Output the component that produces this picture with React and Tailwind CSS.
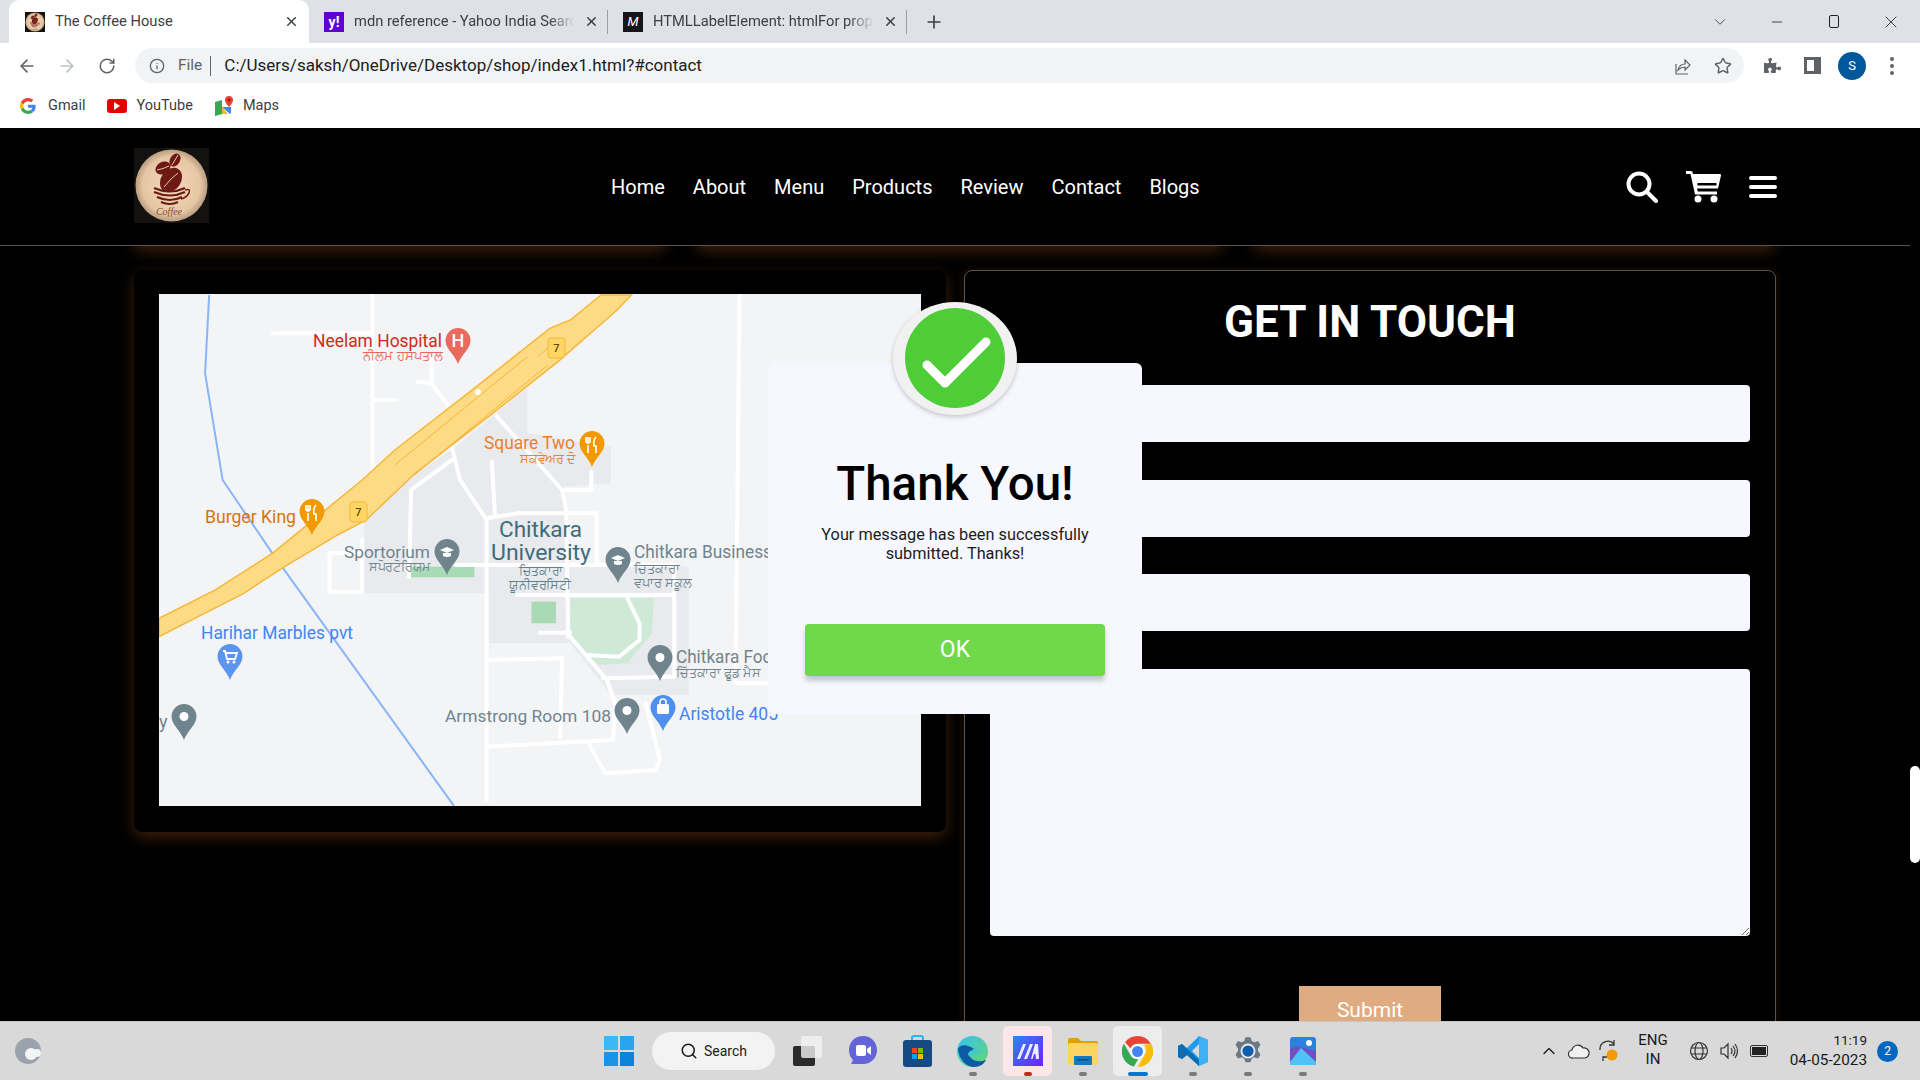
import React from 'react';
import { ArrowLeft, ArrowRight, RotateCw, Info, Star, ChevronDown, ChevronUp, Minus, X, Plus, Search } from 'lucide-react';
import { FaPuzzlePiece } from 'react-icons/fa';

const NAV_LINKS = ['Home', 'About', 'Menu', 'Products', 'Review', 'Contact', 'Blogs'];

function CoffeeLogo({ size }) {
  return (
    <svg width={size} height={size} viewBox="0 0 75 75" className="shrink-0">
      <defs>
        <radialGradient id={`cup${size}`} cx="50%" cy="50%" r="50%">
          <stop offset="0%" stopColor="#f4d9bb" />
          <stop offset="80%" stopColor="#e6c6a4" />
          <stop offset="100%" stopColor="#b99c80" />
        </radialGradient>
      </defs>
      <rect width="75" height="75" fill="#141210" />
      <circle cx="37.5" cy="37.5" r="36" fill={`url(#cup${size})`} />
      <g fill="#6d1a14">
        <ellipse cx="37" cy="32" rx="10" ry="13" transform="rotate(35 37 32)" />
        <ellipse cx="29" cy="20" rx="6" ry="8" transform="rotate(60 29 20)" />
        <ellipse cx="41" cy="12" rx="5" ry="7" transform="rotate(30 41 12)" />
      </g>
      <g fill="none" stroke="#e6c6a4" strokeWidth="1">
        <path d="M30 39 Q37 30 44 25" />
        <path d="M23 22 Q29 21 35 18" />
        <path d="M38 17 Q41 12 44 7" />
      </g>
      <g fill="none" stroke="#6d1a14" strokeWidth="2.2">
        <path d="M20 40 Q36 47 51 40" />
        <path d="M20 44 Q36 51 51 44" />
        <path d="M23 49 Q36 55 48 49" />
        <path d="M27 54 Q36 58 44 54" />
        <path d="M51 42 Q57 40 55 45 Q52 50 47 51" strokeWidth="1.5" />
      </g>
      <text x="35" y="67" textAnchor="middle" fontFamily="'Liberation Serif', serif" fontStyle="italic" fontSize="10" fill="#7d4a38">Coffee</text>
    </svg>
  );
}

function Tab({ icon, title, active, divider }) {
  return (
    <div className={active
      ? 'ml-[9px] w-[300px] h-full bg-white rounded-t-[10px] flex items-center pl-[16px] pr-[12px]'
      : 'w-[299px] h-full flex items-center pl-[15px] pr-[12px]'}>
      {icon}
      <span className={active
        ? 'ml-[10px] w-[215px] text-[14.7px] text-[#3c4043] whitespace-nowrap overflow-hidden'
        : 'ml-[10px] w-[221px] text-[14.7px] text-[#3c4043] whitespace-nowrap overflow-hidden [mask-image:linear-gradient(to_right,black_88%,transparent)]'}>{title}</span>
      <X size={15} strokeWidth={2.4} className={active ? 'ml-auto -mr-[2px] text-[#3c4043]' : 'ml-auto mr-[3px] text-[#3c4043]'} />
      {divider && <div className="w-px h-[24px] bg-[#9aa0a6] ml-[5px] -mr-[12px]" />}
    </div>
  );
}

function TabStrip() {
  return (
    <div className="h-[43px] bg-[#dee1e6] flex items-end">
      <Tab active title="The Coffee House" icon={<CoffeeLogo size={20} />} />
      <Tab divider title="mdn reference - Yahoo India Search" icon={
        <div className="w-[20px] h-[20px] bg-[#6001d2] text-white text-[14px] font-bold leading-[20px] text-center shrink-0">y!</div>
      } />
      <Tab divider title="HTMLLabelElement: htmlFor property" icon={
        <div className="w-[20px] h-[20px] bg-[#15141a] text-white text-[13px] italic leading-[20px] text-center shrink-0">M</div>
      } />
      <div className="w-[40px] h-full flex items-center justify-center ml-[7px]">
        <Plus size={20} strokeWidth={2} className="text-[#3c4043]" />
      </div>
      <div className="ml-auto flex h-full items-center pr-px text-[#202124]">
        <div className="w-[57px] flex justify-center"><ChevronDown size={18} strokeWidth={1} /></div>
        <div className="w-[57px] flex justify-center"><Minus size={16} strokeWidth={1.2} /></div>
        <div className="w-[57px] flex justify-center">
          <div className="w-[10px] h-[13px] border border-[#202124] rounded-[2px]" />
        </div>
        <div className="w-[57px] flex justify-center"><X size={20} strokeWidth={1} /></div>
      </div>
    </div>
  );
}

function Toolbar() {
  return (
    <div className="h-[43px] pt-[2px] bg-white flex items-center pl-[7px]">
      <div className="w-[40px] flex justify-center"><ArrowLeft size={20} className="text-[#5f6368]" /></div>
      <div className="w-[40px] flex justify-center"><ArrowRight size={20} className="text-[#bdc1c6]" /></div>
      <div className="w-[40px] flex justify-center"><RotateCw size={18} className="text-[#5f6368]" /></div>
      <div className="ml-[8px] w-[1609px] h-[35px] rounded-full bg-[#f1f3f4] flex items-center pl-[14px]">
        <Info size={16} className="text-[#5f6368]" />
        <span className="ml-[13px] text-[15.5px] text-[#5f6368]">File</span>
        <div className="ml-[8px] w-px h-[20px] bg-[#5f6368]" />
        <span className="ml-[13px] text-[17px] text-[#202124]">C:/Users/saksh/OneDrive/Desktop/shop/index1.html?#contact</span>
        <svg width="18" height="20" viewBox="0 0 18 20" fill="none" stroke="#5f6368" strokeWidth="1.2" className="ml-auto">
          <path d="M3 8v10h12" />
          <path d="M5 14c1-4 4-6 7-6V4l5 5-5 5v-3c-3 0-5 1-7 3z" />
        </svg>
        <Star size={18} strokeWidth={2} className="ml-[23px] mr-[12px] text-[#5f6368]" />
      </div>
      <div className="ml-[8px] w-[40px] flex justify-center"><FaPuzzlePiece size={17} className="text-[#5f6368]" /></div>
      <div className="w-[40px] flex justify-center">
        <div className="w-[17px] h-[17px] border-[3px] border-r-[7px] border-[#5f6368]" />
      </div>
      <div className="w-[40px] flex justify-center">
        <div className="w-[28px] h-[28px] rounded-full bg-[#01579b] text-white text-[13px] leading-[28px] text-center">S</div>
      </div>
      <div className="w-[40px] flex flex-col items-center gap-[3px]">
        <div className="w-[4px] h-[4px] rounded-full bg-[#5f6368]" />
        <div className="w-[4px] h-[4px] rounded-full bg-[#5f6368]" />
        <div className="w-[4px] h-[4px] rounded-full bg-[#5f6368]" />
      </div>
    </div>
  );
}

function Bookmarks() {
  return (
    <div className="h-[42px] pb-[3px] bg-white flex items-center text-[14.5px] text-[#3c4043]">
      <svg width="16" height="16" viewBox="0 0 48 48" className="ml-[20px]">
        <path fill="#ea4335" d="M24 9.5c3.5 0 6.700 1.200 9.200 3.600l6.900-6.900C35.900 2.400 30.500 0 24 0 14.600 0 6.500 5.400 2.600 13.200l8 6.200C12.500 13.600 17.800 9.500 24 9.500z" />
        <path fill="#4285f4" d="M47 24.500c0-1.600-.2-3.100-.4-4.500H24v9h12.900c-.6 3-2.200 5.500-4.700 7.200l7.700 6C44.400 38.600 47 32.100 47 24.500z" />
        <path fill="#fbbc05" d="M10.500 28.600c-.5-1.400-.8-3-.8-4.600s.3-3.200.8-4.600l-8-6.200C.9 16.500 0 20.100 0 24s.9 7.500 2.600 10.800z" />
        <path fill="#34a853" d="M24 48c6.500 0 11.900-2.100 15.900-5.800l-7.700-6c-2.200 1.500-4.900 2.300-8.200 2.300-6.200 0-11.500-4.100-13.400-9.900l-8 6.200C6.500 42.600 14.600 48 24 48z" />
      </svg>
      <span className="ml-[12px]">Gmail</span>
      <div className="ml-[21px] w-[20px] h-[14px] rounded-[3px] bg-[#e60000] flex items-center justify-center">
        <div className="w-0 h-0 border-y-[4px] border-y-transparent border-l-[6px] border-l-white" />
      </div>
      <span className="ml-[10px]">YouTube</span>
      <svg width="20" height="20" viewBox="0 0 20 20" className="ml-[21px]">
        <path fill="#34a853" d="M1 6l7-2v14l-7 2z" />
        <path fill="#fbbc05" d="M8 11l6 7H8z" />
        <path fill="#4285f4" d="M8 11l8 7 1-1V11z" />
        <path fill="#ea4335" d="M15 0a4 4 0 0 0-4 4c0 3 4 7 4 7s4-4 4-7a4 4 0 0 0-4-4z" />
        <circle cx="15" cy="4" r="1.500" fill="#a50e0e" />
      </svg>
      <span className="ml-[9px]">Maps</span>
    </div>
  );
}

function Pin({ x, y, color, children }) {
  return (
    <g transform={`translate(${x} ${y})`}>
      <path d="M0 36 C-3 27 -12.500 21 -12.500 12.500 A12.500 12.500 0 0 1 12.500 12.500 C12.500 21 3 27 0 36z" fill={color} />
      {children}
    </g>
  );
}

const Dot = () => <circle cx="0" cy="12.500" r="4.500" fill="#fff" />;
const Fork = () => <path d="M-4 6v6M-6 6v4q0 2 2 2t2-2V6M-4 14v8M4 6q-3 3-2 9h2v7" stroke="#fff" strokeWidth="1.600" fill="none" />;
const Cap = () => <path d="M-7 11l7-3 7 3-7 3zM-4 14v3q4 2 8 0v-3" fill="#fff" />;

function MapLabel({ x, y, w, size = 18, weight = 400, color, children }) {
  return (
    <text x={x} y={y} textLength={w} lengthAdjust="spacingAndGlyphs" fontSize={size} fontWeight={weight} fill={color}
      fontFamily="Roboto, 'Noto Sans', sans-serif">{children}</text>
  );
}

function CampusMap() {
  const roads = [
    'M545 15V575', 'M300 130H545', 'M550 330H600', 'M1445 15L1435 1180H1510',
    'M690 210V280L745 370M690 280L655 275', 'M840 365L1010 600L1020 660L1025 1040',
    'M740 470L760 570L825 690V1530', 'M740 510L640 600L635 860', 'M838 515L845 670',
    'M1082 545V600H1015', 'M825 685L900 670H1095V820', 'M520 750V905H440V790H520',
    'M750 825H1280', 'M900 915H1285M1285 825V1160', 'M1170 925L1200 1000V1050L1150 1100L1070 1095',
    'M955 1028H1030', 'M1030 1040L1120 1170L1140 1240L1135 1350L830 1370',
    'M830 1110L1010 1105L1005 1340', 'M1110 1165L1280 1160', 'M1075 1360L1115 1450L1240 1440L1250 1410L1215 1240',
  ];
  const vb = 'translate(150 290) scale(0.408 0.3333)';
  return (
    <svg width="762" height="512" viewBox="159 294 762 512" className="block">
      <defs><clipPath id="mapText"><rect x="159" y="294" width="619" height="512" /></clipPath></defs>
      <rect x="159" y="294" width="762" height="512" fill="#f3f4f6" />
      <g transform={vb}>
        <path d="M750 470L925 290V430L1130 470V580L1015 590L1020 820L1320 830V1215H1130L1030 1060H830V910H525V690L640 560z" fill="#e8eaed" />
        <path d="M1030 925H1235L1230 1030L1170 1120L1100 1125L1030 1050z" fill="#ceead6" />
        <rect x="935" y="935" width="60" height="65" fill="#a8dab5" />
        <rect x="640" y="830" width="155" height="32" fill="#a8dab5" />
        <path d="M145 15L135 250L178 570L300 790L745 1548" fill="none" stroke="#8ab4f8" strokeWidth="2" vectorEffect="non-scaling-stroke" />
        {roads.map((d) => (
          <path key={d} d={d} fill="none" stroke="#fff" strokeWidth="4" strokeLinecap="round" strokeLinejoin="round" vectorEffect="non-scaling-stroke" />
        ))}
        <path d="M1105 15L1030 90L980 115L800 290L600 480L520 570L440 650L300 790L160 900L22 985V1040L230 910L330 830L460 735L530 690L650 550L840 370L1000 215L1145 60L1180 15z"
          fill="#fddb85" stroke="#f6b73c" strokeWidth="1.500" vectorEffect="non-scaling-stroke" />
        <path d="M600 525L925 200M648 555L975 225M950 200L985 165" fill="none" stroke="#f6b73c" strokeWidth="1" vectorEffect="non-scaling-stroke" />
      </g>
      <g fontFamily="Roboto, sans-serif" fontSize="11" fontWeight="500" fill="#5f4b00" textAnchor="middle">
        <rect x="548" y="338" width="17" height="20" rx="3" fill="#fdd663" stroke="#f6b73c" />
        <text x="556.500" y="352">7</text>
        <rect x="350" y="502" width="17" height="20" rx="3" fill="#fdd663" stroke="#f6b73c" />
        <text x="358.500" y="516">7</text>
      </g>
      <circle cx="478" cy="392" r="3" fill="#fff" />

      <Pin x={458} y={328} color="#ea6a5e">
        <text x="0" y="19" textAnchor="middle" fontSize="18" fontWeight="500" fill="#fff" fontFamily="Roboto, sans-serif">H</text>
      </Pin>
      <Pin x={592} y={431} color="#f29900"><Fork /></Pin>
      <Pin x={312} y={499} color="#f29900"><Fork /></Pin>
      <Pin x={447} y={539} color="#70848e"><Cap /></Pin>
      <Pin x={618} y={547} color="#70848e"><Cap /></Pin>
      <Pin x={660} y={645} color="#70848e"><Dot /></Pin>
      <Pin x={627} y={698} color="#70848e"><Dot /></Pin>
      <Pin x={184} y={704} color="#70848e"><Dot /></Pin>
      <Pin x={230} y={644} color="#5b95f0">
        <path d="M-7 7h2l2 8h8l2-6H-4" stroke="#fff" strokeWidth="1.800" fill="none" />
        <circle cx="-2" cy="18" r="1.500" fill="#fff" /><circle cx="4" cy="18" r="1.500" fill="#fff" />
      </Pin>
      <Pin x={663} y={695} color="#4f8ff0">
        <rect x="-6" y="9" width="12" height="10" rx="1.500" fill="#fff" />
        <path d="M-3 9V7a3 3 0 0 1 6 0v2" stroke="#fff" strokeWidth="1.500" fill="none" />
      </Pin>

      <MapLabel x={313} y={347} w={129} color="#d5281c">Neelam Hospital</MapLabel>
      <MapLabel x={363} y={360} w={80} size={13} color="#e8695c">ਨੀਲਮ ਹਸਪਤਾਲ</MapLabel>
      <MapLabel x={484} y={449} w={91} color="#e8812b">Square Two</MapLabel>
      <MapLabel x={520} y={463} w={56} size={13} color="#e8812b">ਸਕਵੇਅਰ ਦੋ</MapLabel>
      <MapLabel x={205} y={523} w={91} color="#d9730f">Burger King</MapLabel>
      <MapLabel x={344} y={558} w={86} size={17} color="#70848e">Sportorium</MapLabel>
      <MapLabel x={369} y={571} w={62} size={13} color="#70848e">ਸਪੋਰਟੋਰਿਯਮ</MapLabel>
      <MapLabel x={499} y={537} w={83} size={22} color="#3f6c7a">Chitkara</MapLabel>
      <MapLabel x={491} y={560} w={100} size={22} color="#3f6c7a">University</MapLabel>
      <MapLabel x={519} y={575} w={44} size={13} color="#5f7f8a">ਚਿਤਕਾਰਾ</MapLabel>
      <MapLabel x={509} y={589} w={62} size={13} color="#5f7f8a">ਯੂਨੀਵਰਸਿਟੀ</MapLabel>
      <g clipPath="url(#mapText)">
        <MapLabel x={634} y={558} w={138} size={18} color="#70848e">Chitkara Business</MapLabel>
        <MapLabel x={676} y={663} w={106} size={18} color="#70848e">Chitkara Food</MapLabel>
        <MapLabel x={679} y={720} w={99} size={18} color="#4285f4">Aristotle 405</MapLabel>
      </g>
      <MapLabel x={634} y={573} w={46} size={13} color="#70848e">ਚਿਤਕਾਰਾ</MapLabel>
      <MapLabel x={634} y={587} w={58} size={13} color="#70848e">ਵਪਾਰ ਸਕੂਲ</MapLabel>
      <MapLabel x={676} y={677} w={85} size={13} color="#70848e">ਚਿੱਤਕਾਰਾ ਫੂਡ ਮੈਸ</MapLabel>
      <MapLabel x={201} y={639} w={152} color="#4285f4">Harihar Marbles pvt</MapLabel>
      <MapLabel x={445} y={722} w={166} size={17} color="#70848e">Armstrong Room 108</MapLabel>
      <text x="159" y="728" fontSize="18" fill="#70848e" fontFamily="Roboto, sans-serif">y</text>
    </svg>
  );
}

function ContactForm() {
  return (
    <div className="w-[812px] h-[900px] shrink-0 border border-[#555] rounded-[8px] px-[25px] shadow-[0_0_10px_rgba(190,100,30,0.18)]">
      <h3 className="text-center text-white text-[44px] font-bold leading-[52px] pt-[25px]">GET IN TOUCH</h3>
      <input className="block mt-[37px] w-full h-[57px] rounded-[4px] bg-[#f6f7ff]" />
      <input className="block mt-[38px] w-full h-[57px] rounded-[4px] bg-[#f6f7ff]" />
      <input className="block mt-[37px] w-full h-[57px] rounded-[4px] bg-[#f6f7ff]" />
      <textarea className="block mt-[38px] w-full h-[267px] rounded-[4px] bg-[#f6f7ff]" />
      <button className="block mx-auto mt-[50px] w-[142px] h-[50px] bg-[#deac80] text-white text-[21px]">Submit</button>
    </div>
  );
}

function ThankYouModal() {
  return (
    <div className="absolute left-[768px] top-[235px] w-[374px] h-[351px] bg-[#f6f7ff] rounded-[6px] flex flex-col items-center">
      <div className="absolute left-[125px] -top-[61px] w-[124px] h-[113px] rounded-[50%] bg-[#f1f1f1] shadow-[0_2px_5px_rgba(0,0,0,0.2)] flex items-center justify-center">
        <div className="-mt-[2px] w-[100px] h-[100px] rounded-full bg-[#4ecd39]">
          <svg width="100" height="100" viewBox="0 0 100 100">
            <path d="M22 57L40 75L81 34" fill="none" stroke="#fff" strokeWidth="9" strokeLinecap="round" strokeLinejoin="round" />
          </svg>
        </div>
      </div>
      <h2 className="mt-[93px] text-[47.5px] leading-[56px] font-medium text-black">Thank You!</h2>
      <p className="mt-[13px] w-[300px] text-center text-[16.3px] leading-[19px] text-[#1c1c1c]">Your message has been successfully submitted. Thanks!</p>
      <button className="mt-[61px] w-[300px] h-[52px] rounded-[4px] bg-[#6fd84b] text-white text-[23px] shadow-[0_5px_5px_rgba(0,0,0,0.2)]">OK</button>
    </div>
  );
}

function Header() {
  return (
    <header className="relative z-10 h-[118px] bg-black border-b border-[#555] flex items-center pl-[134px] pr-[133px]">
      <div className="-mt-[3px]"><CoffeeLogo size={75} /></div>
      <nav className="ml-[402px] flex gap-[28px] text-white text-[20px]">
        {NAV_LINKS.map((link) => <a key={link}>{link}</a>)}
      </nav>
      <div className="ml-auto flex items-center gap-[28px] text-white">
        <svg width="32" height="32" viewBox="0 0 32 32" fill="none" stroke="#fff" strokeWidth="4" strokeLinecap="round">
          <circle cx="13" cy="13" r="10.500" />
          <path d="M21 21l9 9" />
        </svg>
        <svg width="35" height="32" viewBox="0 0 35 32" fill="#fff">
          <path d="M0 0h5q1 0 1.500 1L7 3h27q1.500 0 1 1.500l-3 13H11l.8 3H31v3H9L4.500 3H0z" />
          <rect x="11.500" y="12" width="19" height="2.500" fill="#000" />
          <circle cx="12" cy="28" r="3.500" /><circle cx="28" cy="28" r="3.500" />
        </svg>
        <svg width="28" height="24" viewBox="0 0 28 24" stroke="#fff" strokeWidth="4" strokeLinecap="round">
          <path d="M2 3h24M2 12h24M2 21h24" />
        </svg>
      </div>
    </header>
  );
}

function RunDot({ color = 'bg-[#7a7a7a]', wide }) {
  return <div className={`absolute bottom-[5px] left-1/2 -translate-x-1/2 h-[4px] rounded-full ${wide ? 'w-[20px]' : 'w-[8px]'} ${color}`} />;
}

function TaskSlot({ children, dot, highlight }) {
  return (
    <div className="relative w-[55px] h-[59px] flex items-center justify-center">
      {highlight && <div className={`absolute left-[3px] top-[4px] w-[49px] h-[50px] rounded-[5px] ${highlight}`} />}
      <div className="relative">{children}</div>
      {dot}
    </div>
  );
}

function Taskbar() {
  return (
    <div className="h-[59px] bg-[#d9d9d9] border-t border-[#c6c6c6] flex items-center text-[#1a1a1a]">
      <svg width="28" height="28" viewBox="0 0 28 28" className="ml-[14px]">
        <circle cx="14" cy="14" r="13" fill="#9aa3ab" />
        <circle cx="17" cy="17" r="6" fill="#f2f4f6" />
        <circle cx="23" cy="16" r="4" fill="#f2f4f6" />
      </svg>
      <svg width="30" height="30" viewBox="0 0 30 30" className="ml-[562px]">
        <rect x="0" y="0" width="14" height="14" fill="#3cb8f6" />
        <rect x="16" y="0" width="14" height="14" fill="#27a5ef" />
        <rect x="0" y="16" width="14" height="14" fill="#1895e6" />
        <rect x="16" y="16" width="14" height="14" fill="#0c83d8" />
      </svg>
      <div className="ml-[18px] w-[123px] h-[38px] rounded-full bg-[#f3f3f3] flex items-center pl-[28px] text-[14px]">
        <Search size={18} strokeWidth={2} />
        <span className="ml-[6px]">Search</span>
      </div>
      <div className="ml-[5px] flex">
        <TaskSlot>
          <svg width="29" height="30" viewBox="0 0 29 30">
            <rect x="0" y="10" width="22" height="20" rx="2" fill="#2b2b2b" />
            <rect x="8" y="0" width="21" height="22" rx="2" fill="#f2f2f2" fillOpacity="0.8" />
          </svg>
        </TaskSlot>
        <TaskSlot>
          <svg width="28" height="30" viewBox="0 0 28 30">
            <path d="M14 0C22 0 28 6 28 14S22 28 14 28H2L4 24Q0 20 0 14C0 6 6 0 14 0z" fill="#6264d8" />
            <rect x="7" y="9" width="10" height="11" rx="2" fill="#fff" />
            <path d="M18 13l4-3v9l-4-3z" fill="#fff" />
          </svg>
        </TaskSlot>
        <TaskSlot>
          <svg width="29" height="32" viewBox="0 0 29 32">
            <path d="M9 6V3q0-2 2-2h7q2 0 2 2v3" fill="none" stroke="#2bb5f0" strokeWidth="2" />
            <rect x="0" y="5" width="29" height="27" rx="3" fill="#164a85" />
            <rect x="9" y="13" width="5" height="5" fill="#e8452c" />
            <rect x="15" y="13" width="5" height="5" fill="#7fba00" />
            <rect x="9" y="19" width="5" height="5" fill="#00a4ef" />
            <rect x="15" y="19" width="5" height="5" fill="#ffb900" />
          </svg>
        </TaskSlot>
        <TaskSlot dot={<RunDot />}>
          <svg width="31" height="31" viewBox="0 0 31 31">
            <defs>
              <linearGradient id="edgeA" x1="0" y1="0" x2="1" y2="1">
                <stop offset="0%" stopColor="#35c1f1" /><stop offset="100%" stopColor="#66d96b" />
              </linearGradient>
            </defs>
            <circle cx="15.500" cy="15.500" r="15.500" fill="url(#edgeA)" />
            <path d="M1 13C2 24 10 31 17 31 23 31 27 28 29 24 24 26 17 26 14 22 11 18 14 14 17 13 10 8 3 8 1 13z" fill="#0c59a4" />
            <ellipse cx="20" cy="18" rx="9" ry="4.500" fill="url(#edgeA)" />
          </svg>
        </TaskSlot>
        <TaskSlot highlight="bg-[#fbe7e9]" dot={<RunDot color="bg-[#c42b1c]" />}>
          <svg width="30" height="30" viewBox="0 0 30 30">
            <defs>
              <linearGradient id="mApp" x1="0" y1="0" x2="1" y2="1">
                <stop offset="0%" stopColor="#2f86ee" /><stop offset="100%" stopColor="#6a22ff" />
              </linearGradient>
            </defs>
            <rect width="30" height="30" fill="url(#mApp)" />
            <path d="M4 23L10 8H13L7 23zM11 23L17 8H20L14 23zM18 23L22 8H25L26 23H23L22.500 18H21L19.500 23z" fill="#fff" fillOpacity="0.9" />
          </svg>
        </TaskSlot>
        <TaskSlot dot={<RunDot />}>
          <svg width="30" height="28" viewBox="0 0 30 28">
            <path d="M0 3q0-2 2-2h8l3 3h15q2 0 2 2v3H0z" fill="#e0a100" />
            <rect x="0" y="6" width="30" height="22" rx="2" fill="#fcd462" />
            <rect x="6" y="19" width="18" height="9" rx="1" fill="#1479bd" />
            <rect x="9" y="22" width="12" height="1.500" fill="#0b4f80" />
          </svg>
        </TaskSlot>
        <TaskSlot highlight="bg-[#ededed]" dot={<RunDot color="bg-[#0078d4]" wide />}>
          <svg width="31" height="31" viewBox="0 0 48 48">
            <path fill="#ea4335" d="M24 0a24 24 0 0 1 20.800 12H24a12 12 0 0 0-11 7L4.800 9.600A24 24 0 0 1 24 0z" />
            <path fill="#34a853" d="M3 12l11 19a12 12 0 0 0 11 5l-6.500 11.400A24 24 0 0 1 3 12z" />
            <path fill="#fbbc05" d="M45 12a24 24 0 0 1-21 36l10.500-18A12 12 0 0 0 34 14z" />
            <circle cx="24" cy="24" r="11" fill="#fff" />
            <circle cx="24" cy="24" r="8.500" fill="#4285f4" />
          </svg>
        </TaskSlot>
        <TaskSlot dot={<RunDot />}>
          <svg width="30" height="30" viewBox="0 0 30 30">
            <path d="M21 0l9 4v22l-9 4-12-11-5 4-4-2V10l4-2 5 4zM21 8l-7 7 7 7z" fill="#1f9cf0" />
            <path d="M21 0l9 4v22l-9 4z" fill="#3fb0f5" />
            <path d="M0 10l4-2 17 16v6l-12-11-5 4-4-2z" fill="#0a6db5" />
          </svg>
        </TaskSlot>
        <TaskSlot dot={<RunDot />}>
          <svg width="30" height="30" viewBox="0 0 24 24">
            <path fill="#6b7783" d="M10 1h4l1 3 2 1 3-1 2 3-2 3v2l2 3-2 3-3-1-2 1-1 3h-4l-1-3-2-1-3 1-2-3 2-3v-2L2 7l2-3 3 1 2-1z" />
            <circle cx="12" cy="12" r="6" fill="#fff" fillOpacity="0.85" />
            <circle cx="12" cy="12" r="4.500" fill="#0d5eaf" />
          </svg>
        </TaskSlot>
        <TaskSlot dot={<RunDot />}>
          <svg width="26" height="28" viewBox="0 0 26 28">
            <rect width="26" height="28" rx="3" fill="#2d7fe0" />
            <path d="M0 28V12l6-3 20 5v14z" fill="#6f50c8" />
            <path d="M0 25L11 11 26 25v3H0z" fill="#4fc3f7" />
            <circle cx="19" cy="6" r="3" fill="#fff" />
          </svg>
        </TaskSlot>
      </div>
      <div className="ml-[204px] w-[30px] flex justify-center"><ChevronUp size={20} strokeWidth={1.500} /></div>
      <div className="w-[30px] flex justify-center">
        <svg width="22" height="16" viewBox="0 0 22 16" fill="#f2f2f2" stroke="#333" strokeWidth="1.200">
          <path d="M5 15a4 4 0 0 1-1-8 6 6 0 0 1 11-2 5 5 0 0 1 2 10z" />
        </svg>
      </div>
      <div className="w-[30px] flex justify-center">
        <svg width="22" height="24" viewBox="0 0 22 24" fill="none" stroke="#333" strokeWidth="1.300">
          <path d="M2 11a8 8 0 0 1 14-6M16 1v5h-5M5 22v-4h4" />
          <circle cx="14" cy="16" r="5.500" fill="#f59a00" stroke="none" />
        </svg>
      </div>
      <div className="w-[58px] text-center text-[15px] leading-[19px] -mt-[2px]">ENG<br />IN</div>
      <div className="ml-[2px] w-[30px] flex justify-center">
        <svg width="20" height="20" viewBox="0 0 20 20" fill="none" stroke="#333" strokeWidth="1.200">
          <circle cx="10" cy="10" r="8.500" />
          <ellipse cx="10" cy="10" rx="4" ry="8.500" />
          <path d="M2 7h16M2 13h16" />
        </svg>
      </div>
      <div className="w-[30px] flex justify-center">
        <svg width="20" height="20" viewBox="0 0 20 20" fill="none" stroke="#333" strokeWidth="1.200">
          <path d="M2 7h3l4-4v14l-4-4H2zM12 7q2 3 0 6M14 5q4 5 0 10M16 3q5 7 0 14" />
        </svg>
      </div>
      <div className="w-[30px] flex justify-center">
        <div className="w-[18px] h-[12px] rounded-[2px] border border-[#333] p-[1px] flex">
          <div className="w-full bg-[#222]" />
        </div>
      </div>
      <div className="ml-[6px] w-[87px] text-right leading-[20px] -mt-[2px]">
        <div className="text-[13.5px]">11:19</div>
        <div className="text-[15.3px]">04-05-2023</div>
      </div>
      <div className="ml-[10px] w-[21px] h-[21px] rounded-full bg-[#0067c0] text-white text-[12px] leading-[21px] text-center">2</div>
    </div>
  );
}

export default function App() {
  return (
    <div className="w-[1920px] h-[1080px] flex flex-col overflow-hidden font-['Roboto',sans-serif]">
      <TabStrip />
      <Toolbar />
      <Bookmarks />
      <main className="relative flex-1 bg-black overflow-hidden flex">
        <div className="w-[1910px]">
          <Header />
          <div className="-mt-[30px] h-[30px] flex pl-[134px] gap-[30px]">
            <div className="w-[532px] rounded-[8px] shadow-[0_5px_15px_rgba(190,100,30,0.32)]" />
            <div className="w-[527px] rounded-[8px] shadow-[0_5px_15px_rgba(190,100,30,0.32)]" />
            <div className="w-[522px] rounded-[8px] shadow-[0_5px_15px_rgba(190,100,30,0.32)]" />
          </div>
          <section className="mt-[24px] pl-[134px] flex gap-[18px] items-start">
            <div className="w-[812px] h-[562px] rounded-[8px] p-[25px] pt-[24px] shadow-[0_5px_15px_rgba(190,100,30,0.32)]">
              <CampusMap />
            </div>
            <ContactForm />
          </section>
        </div>
        <div className="w-[10px]">
          <div className="mt-[638px] h-[97px] rounded-full bg-white" />
        </div>
        <ThankYouModal />
      </main>
      <Taskbar />
    </div>
  );
}
